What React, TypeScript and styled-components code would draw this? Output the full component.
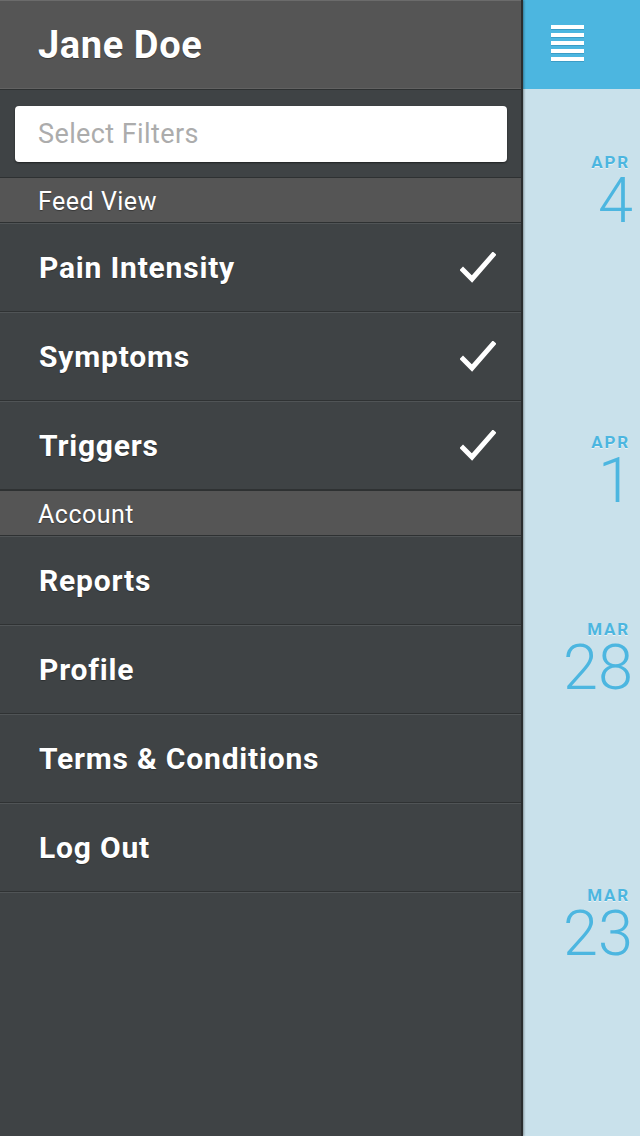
import React from "react";
import styled, { createGlobalStyle } from "styled-components";

const Global = createGlobalStyle`
  html, body { margin: 0; padding: 0; }
  body { width: 640px; height: 1136px; overflow: hidden; font-family: "Roboto", "Liberation Sans", sans-serif; }
`;

const Screen = styled.div`
  display: flex;
  width: 640px;
  height: 1136px;
`;

const Drawer = styled.div`
  width: 521px;
  flex: none;
  display: flex;
  flex-direction: column;
  background: #3f4345;
  border-right: 2px solid #2a2d2e;
  position: relative;
  z-index: 1;
  box-shadow: 1px 0 2px rgba(0, 0, 0, 0.35);
`;

const Header = styled.div`
  height: 87px;
  background: #555555;
  border-top: 1px solid #6b6b6b;
  border-bottom: 1px solid #626262;
  display: flex;
  align-items: center;
  padding-left: 38px;
  color: #fff;
  font-size: 38px;
  font-weight: 700;
  letter-spacing: 0.6px;
  text-shadow: 0 1px 1px rgba(0, 0, 0, 0.35);
`;

const SearchArea = styled.div`
  height: 88px;
  border-top: 1px solid #2e3132;
  box-sizing: border-box;
  padding: 16px 14px 0 15px;
`;

const SearchBox = styled.div`
  height: 56px;
  background: #fff;
  border-radius: 4px;
  box-shadow: 0 1px 2px rgba(0, 0, 0, 0.5);
  display: flex;
  align-items: center;
  padding-left: 23px;
  color: #acacac;
  font-size: 27px;
  letter-spacing: 0.4px;
`;

const Section = styled.div`
  height: 46px;
  box-sizing: border-box;
  padding-top: 3px;
  background: #555555;
  border-top: 1px solid #2e3132;
  border-bottom: 1px solid #2e3132;
  display: flex;
  align-items: center;
  padding-left: 38px;
  color: #fff;
  font-size: 25px;
  letter-spacing: 0.5px;
  text-shadow: 0 1px 1px rgba(0, 0, 0, 0.35);
`;

const Row = styled.div`
  height: 87px;
  border-top: 1px solid #505456;
  border-bottom: 1px solid #2f3233;
  display: flex;
  align-items: center;
  justify-content: space-between;
  padding: 0 25px 0 39px;
  color: #fff;
  font-size: 30px;
  font-weight: 700;
  letter-spacing: 0.8px;
  text-shadow: 0 1px 1px rgba(0, 0, 0, 0.3);
`;

const Filler = styled.div`
  flex: 1;
  border-top: 1px solid #505456;
`;

const Check = () => (
  <svg width="36" height="32" viewBox="0 0 36 32">
    <path d="M3 18 L12 27 L33 3" fill="none" stroke="#fff" strokeWidth="5" strokeLinecap="square" />
  </svg>
);

const Feed = styled.div`
  flex: 1;
  display: flex;
  flex-direction: column;
  background: #c9e1eb;
`;

const TopBar = styled.div`
  height: 89px;
  background: #4cb6e0;
  display: flex;
  align-items: flex-start;
  padding: 25px 0 0 28px;
  box-sizing: border-box;
`;

const Burger = styled.div`
  display: flex;
  flex-direction: column;
  gap: 4px;
`;

const BurgerLine = styled.div`
  width: 33px;
  height: 4px;
  background: #fff;
  box-shadow: 0 1px 0 #3b9cc6;
`;

const Day = styled.div<{ $top: number }>`
  margin-top: ${(p) => p.$top}px;
  display: flex;
  flex-direction: column;
  align-items: flex-end;
  padding-right: 10px;
  color: #4cb6e0;
`;

const Month = styled.div`
  font-size: 17px;
  font-weight: 700;
  letter-spacing: 1.8px;
  line-height: 18px;
  text-shadow: 0 1px 0 rgba(255, 255, 255, 0.6);
`;

const DayNum = styled.div`
  font-size: 63px;
  font-weight: 300;
  line-height: 60px;
  margin-right: -3px;
`;

const filters = ["Pain Intensity", "Symptoms", "Triggers"];
const account = ["Reports", "Profile", "Terms & Conditions", "Log Out"];
const days: [string, string, number][] = [
  ["APR", "4", 64],
  ["APR", "1", 202],
  ["MAR", "28", 109],
  ["MAR", "23", 188],
];

export default function App() {
  return (
    <>
      <Global />
      <Screen>
        <Drawer>
          <Header>Jane Doe</Header>
          <SearchArea>
            <SearchBox>Select Filters</SearchBox>
          </SearchArea>
          <Section>Feed View</Section>
          {filters.map((f) => (
            <Row key={f}>
              {f}
              <Check />
            </Row>
          ))}
          <Section>Account</Section>
          {account.map((a) => (
            <Row key={a}>{a}</Row>
          ))}
          <Filler />
        </Drawer>
        <Feed>
          <TopBar>
            <Burger>
              {[0, 1, 2, 3, 4].map((i) => (
                <BurgerLine key={i} />
              ))}
            </Burger>
          </TopBar>
          {days.map(([m, d, t]) => (
            <Day key={m + d} $top={t}>
              <Month>{m}</Month>
              <DayNum>{d}</DayNum>
            </Day>
          ))}
        </Feed>
      </Screen>
    </>
  );
}
